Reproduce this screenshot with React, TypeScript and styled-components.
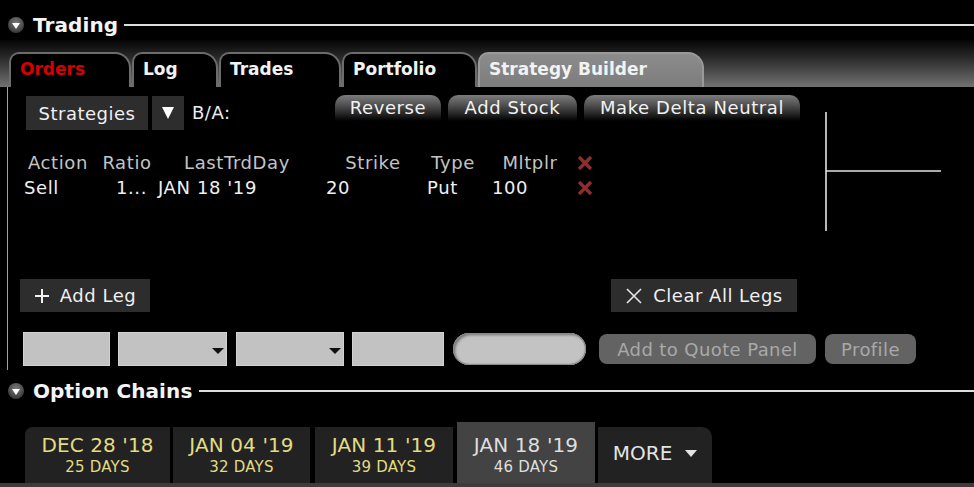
import React from "react";
import styled, { createGlobalStyle } from "styled-components";

const Global = createGlobalStyle`
  html, body { margin: 0; padding: 0; background: #000; }
  #root { width: 974px; height: 487px; overflow: hidden; background: #000; }
  * { box-sizing: border-box; }
`;

const FONT = `"DejaVu Sans", Verdana, sans-serif`;

const Page = styled.div`
  width: 974px;
  height: 487px;
  display: flex;
  flex-direction: column;
  font-family: ${FONT};
  color: #eee;
`;

const SectionHeader = styled.div<{ $top: number; $h: number }>`
  height: ${(p) => p.$h}px;
  padding-top: ${(p) => p.$top}px;
  padding-left: 8px;
  display: flex;
  align-items: center;
`;

const Toggle = styled.span`
  width: 16px;
  height: 16px;
  border-radius: 50%;
  background: radial-gradient(circle at 50% 35%, #7a7a7a, #3a3a3a 75%);
  display: flex;
  align-items: center;
  justify-content: center;
  flex: none;
  &::after {
    content: "";
    margin-top: 2px;
    border-left: 4px solid transparent;
    border-right: 4px solid transparent;
    border-top: 6px solid #fff;
  }
`;

const SectionTitle = styled.span`
  font-weight: bold;
  font-size: 20px;
  color: #f4f4f4;
  margin-left: 9px;
  letter-spacing: 0.1px;
`;

const Rule = styled.span<{ $gap: number }>`
  flex: 1;
  height: 2px;
  background: #dcdcdc;
  margin-left: ${(p) => p.$gap}px;
`;

const TabBar = styled.div`
  height: 47px;
  padding-left: 9px;
  display: flex;
  align-items: flex-end;
  background: linear-gradient(to bottom, #050505 0%, #2c2c2c 40%, #727272 100%);
`;

const Tab = styled.div<{ $w: number; $active?: boolean; $red?: boolean }>`
  width: ${(p) => p.$w}px;
  height: 35px;
  margin-right: 1px;
  padding-left: 9px;
  line-height: 31px;
  font-weight: bold;
  font-size: 17px;
  color: ${(p) => (p.$red ? "#d60000" : "#f2f2f2")};
  background: ${(p) => (p.$active ? "linear-gradient(#8c8c8c, #7c7c7c)" : "#000")};
  border: 2px solid ${(p) => (p.$active ? "#9a9a9a" : "#6c6c6c")};
  border-bottom: none;
  border-radius: 10px 16px 0 0;
`;

const PanelBody = styled.div`
  height: 283px;
  margin-left: 7px;
  border-left: 1px solid #a0a0a0;
  padding: 8px 0 0 12px;
  display: grid;
  grid-template-columns: 780px 1fr;
  grid-template-rows: auto auto;
  align-content: start;
`;

const LeftCol = styled.div`
  display: flex;
  flex-direction: column;
`;

const Toolbar = styled.div`
  height: 35px;
  display: flex;
  align-items: flex-start;
`;

const DarkButton = styled.div<{ $w: number; $h: number; $ml?: number; $mt?: number }>`
  width: ${(p) => p.$w}px;
  height: ${(p) => p.$h}px;
  margin-left: ${(p) => p.$ml ?? 0}px;
  margin-top: ${(p) => p.$mt ?? 0}px;
  background: #2d2d2d;
  color: #f0f0f0;
  font-size: 18px;
  letter-spacing: 0.5px;
  display: flex;
  align-items: center;
  justify-content: center;
  gap: 10px;
  flex: none;
`;

const DownTri = styled.span<{ $w: number; $h: number; $color: string }>`
  display: inline-block;
  border-left: ${(p) => p.$w / 2}px solid transparent;
  border-right: ${(p) => p.$w / 2}px solid transparent;
  border-top: ${(p) => p.$h}px solid ${(p) => p.$color};
`;

const Label = styled.span`
  font-size: 18px;
  letter-spacing: 0.5px;
  color: #eee;
  margin-left: 8px;
  line-height: 36px;
`;

const GlossGroup = styled.div`
  margin-left: auto;
  display: flex;
  gap: 7px;
`;

const GlossButton = styled.div<{ $w: number }>`
  width: ${(p) => p.$w}px;
  height: 26px;
  border-radius: 10px 10px 3px 3px;
  background: linear-gradient(to bottom, #7c7c7c 0%, #555 35%, #222 75%, #000 100%);
  color: #f2f2f2;
  font-size: 18px;
  letter-spacing: 0.6px;
  display: flex;
  align-items: center;
  justify-content: center;
  padding-bottom: 1px;
`;

const LegGrid = styled.div`
  margin-top: 20px;
  display: grid;
  grid-template-columns: 76px 58px 170px 98px 62px 92px 18px;
  grid-auto-rows: 25px;
  font-size: 18px;
  letter-spacing: 0.6px;
`;

const Cell = styled.div<{ $head?: boolean; $align?: "left" | "center" | "right"; $pl?: number; $pr?: number }>`
  color: ${(p) => (p.$head ? "#c4c4c4" : "#f0f0f0")};
  padding-left: ${(p) => p.$pl ?? 0}px;
  padding-right: ${(p) => p.$pr ?? 0}px;
  line-height: 25px;
  white-space: nowrap;
  display: flex;
  align-items: center;
  justify-content: ${(p) => (p.$align === "center" ? "center" : p.$align === "right" ? "flex-end" : "flex-start")};
`;

const ActionsRow = styled.div`
  margin-top: 79px;
  display: flex;
  justify-content: space-between;
  padding-right: 3px;
`;

const Chart = styled.svg`
  margin-top: 17px;
  margin-left: 25px;
  display: block;
`;

const InputRow = styled.div`
  grid-column: 1 / span 2;
  margin-top: 20px;
  margin-left: 3px;
  display: flex;
  align-items: center;
  height: 34px;
`;

const Field = styled.div<{ $w: number; $ml: number }>`
  width: ${(p) => p.$w}px;
  height: 34px;
  margin-left: ${(p) => p.$ml}px;
  background: #c2c2c2;
  border: 1px solid #d2d2d2;
  display: flex;
  align-items: center;
  justify-content: flex-end;
  padding-right: 2px;
  padding-top: 4px;
  flex: none;
`;

const Pill = styled.div<{ $w: number; $ml: number }>`
  width: ${(p) => p.$w}px;
  height: 32px;
  margin-left: ${(p) => p.$ml}px;
  border-radius: 16px;
  background: #c3c3c3;
  box-shadow: inset 0 0 0 1px #8a8a8a, inset 2px 2px 3px #6e6e6e, inset -1px -1px 2px #9a9a9a;
  flex: none;
`;

const MutedButton = styled.div<{ $w: number; $ml: number }>`
  width: ${(p) => p.$w}px;
  height: 30px;
  margin-left: ${(p) => p.$ml}px;
  border-radius: 8px;
  background: #636363;
  color: #a9a9a9;
  font-size: 18px;
  letter-spacing: 0.4px;
  display: flex;
  align-items: center;
  justify-content: center;
  flex: none;
`;

const DateTabs = styled.div`
  height: 77px;
  padding-left: 25px;
  display: flex;
  align-items: flex-end;
  border-bottom: 4px solid #3c3c3c;
`;

const DateTab = styled.div<{ $w: number; $ml: number; $active?: boolean; $first?: boolean; $last?: boolean }>`
  width: ${(p) => p.$w}px;
  height: ${(p) => (p.$active ? 61 : 56)}px;
  margin-left: ${(p) => p.$ml}px;
  padding-top: ${(p) => (p.$active ? 10 : 5)}px;
  background: ${(p) => (p.$active ? "#434343" : "#222")};
  border-radius: ${(p) => (p.$first ? "8px 0 0 0" : p.$last ? "0 10px 0 0" : "0")};
  display: flex;
  flex-direction: column;
  align-items: center;
  color: ${(p) => (p.$active ? "#dedede" : "#e2dc82")};
  flex: none;
`;

const DateMain = styled.span`
  font-size: 20px;
  line-height: 26px;
  letter-spacing: 0.1px;
`;

const DateSub = styled.span`
  font-size: 15px;
  line-height: 19px;
  letter-spacing: 0.2px;
`;

const MoreLabel = styled.span`
  font-size: 20px;
  line-height: 42px;
  color: #e4e4e4;
  display: flex;
  align-items: center;
  gap: 13px;
`;

const RemoveX = () => (
  <svg width="16" height="16" viewBox="0 0 16 16">
    <path d="M2 2 L14 14 M14 2 L2 14" stroke="#8e2f2c" strokeWidth="3.2" strokeLinecap="butt" />
  </svg>
);

const PlusIcon = () => (
  <svg width="16" height="16" viewBox="0 0 16 16">
    <path d="M8 1 V15 M1 8 H15" stroke="#f0f0f0" strokeWidth="2" />
  </svg>
);

const CloseIcon = () => (
  <svg width="18" height="18" viewBox="0 0 18 18">
    <path d="M2 2 L16 16 M16 2 L2 16" stroke="#e6e6e6" strokeWidth="1.6" />
  </svg>
);

const tabs = [
  { label: "Orders", w: 122, red: true },
  { label: "Log", w: 86 },
  { label: "Trades", w: 122 },
  { label: "Portfolio", w: 135 },
  { label: "Strategy Builder", w: 226, active: true },
];

const dates = [
  { d: "DEC 28 '18", n: "25 DAYS", w: 145, ml: 0, first: true },
  { d: "JAN 04 '19", n: "32 DAYS", w: 137, ml: 3 },
  { d: "JAN 11 '19", n: "39 DAYS", w: 138, ml: 5 },
  { d: "JAN 18 '19", n: "46 DAYS", w: 138, ml: 4, active: true },
];

export default function App() {
  return (
    <Page>
      <Global />
      <SectionHeader $top={10} $h={40}>
        <Toggle />
        <SectionTitle>Trading</SectionTitle>
        <Rule $gap={6} />
      </SectionHeader>
      <TabBar>
        {tabs.map((t) => (
          <Tab key={t.label} $w={t.w} $red={t.red} $active={t.active}>
            {t.label}
          </Tab>
        ))}
      </TabBar>
      <PanelBody>
        <LeftCol>
          <Toolbar>
            <DarkButton $w={122} $h={34} $ml={6} $mt={1}>Strategies</DarkButton>
            <DarkButton $w={32} $h={34} $ml={4} $mt={1}>
              <DownTri $w={13} $h={12} $color="#fff" />
            </DarkButton>
            <Label>B/A:</Label>
            <GlossGroup>
              <GlossButton $w={106}>Reverse</GlossButton>
              <GlossButton $w={129}>Add Stock</GlossButton>
              <GlossButton $w={216}>Make Delta Neutral</GlossButton>
            </GlossGroup>
          </Toolbar>
          <LegGrid>
            <Cell $head $align="center">Action</Cell>
            <Cell $head $align="center" $pl={4}>Ratio</Cell>
            <Cell $head $align="center" $pr={4}>LastTrdDay</Cell>
            <Cell $head $align="center">Strike</Cell>
            <Cell $head $align="center">Type</Cell>
            <Cell $head $align="center">Mltplr</Cell>
            <Cell $head $align="center"><RemoveX /></Cell>
            <Cell $pl={4}>Sell</Cell>
            <Cell $align="right" $pr={7}>1...</Cell>
            <Cell $pl={4}>JAN 18 '19</Cell>
            <Cell $pl={2}>20</Cell>
            <Cell $pl={5}>Put</Cell>
            <Cell $pl={8}>100</Cell>
            <Cell $align="center"><RemoveX /></Cell>
          </LegGrid>
          <ActionsRow>
            <DarkButton $w={130} $h={33}>
              <PlusIcon />
              <span>Add Leg</span>
            </DarkButton>
            <DarkButton $w={186} $h={33}>
              <CloseIcon />
              <span>Clear All Legs</span>
            </DarkButton>
          </ActionsRow>
        </LeftCol>
        <div>
          <Chart width="118" height="120" viewBox="0 0 118 120">
            <line x1="1" y1="0" x2="1" y2="119" stroke="#e4e4e4" strokeWidth="1.6" />
            <line x1="1" y1="59" x2="116" y2="59" stroke="#e4e4e4" strokeWidth="1.6" />
          </Chart>
        </div>
        <InputRow>
          <Field $w={87} $ml={0} />
          <Field $w={109} $ml={8}>
            <DownTri $w={12} $h={6} $color="#111" />
          </Field>
          <Field $w={108} $ml={9}>
            <DownTri $w={12} $h={6} $color="#111" />
          </Field>
          <Field $w={92} $ml={8} />
          <Pill $w={133} $ml={9} />
          <MutedButton $w={217} $ml={13}>Add to Quote Panel</MutedButton>
          <MutedButton $w={91} $ml={9}>Profile</MutedButton>
        </InputRow>
      </PanelBody>
      <SectionHeader $top={1} $h={40}>
        <Toggle />
        <SectionTitle>Option Chains</SectionTitle>
        <Rule $gap={7} />
      </SectionHeader>
      <DateTabs>
        {dates.map((d) => (
          <DateTab key={d.d} $w={d.w} $ml={d.ml} $active={d.active} $first={d.first}>
            <DateMain>{d.d}</DateMain>
            <DateSub>{d.n}</DateSub>
          </DateTab>
        ))}
        <DateTab $w={114} $ml={3} $last>
          <MoreLabel>
            MORE
            <DownTri $w={12} $h={7} $color="#e4e4e4" />
          </MoreLabel>
        </DateTab>
      </DateTabs>
    </Page>
  );
}
